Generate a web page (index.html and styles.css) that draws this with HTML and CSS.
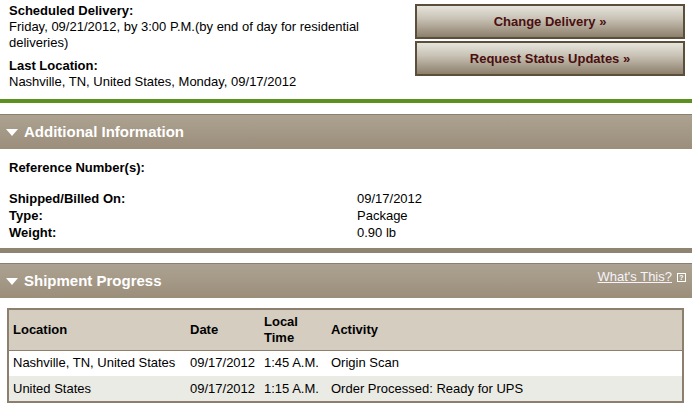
FILE: index.html
```html
<!DOCTYPE html>
<html>
<head>
<meta charset="utf-8">
<link rel="stylesheet" href="styles.css">
</head>
<body>
<div class="top">
  <div class="summary">
    <div class="block">
      <div class="lbl">Scheduled Delivery:</div>
      <div>Friday, 09/21/2012, by 3:00 P.M.(by end of day for residential deliveries)</div>
    </div>
    <div class="block">
      <div class="lbl">Last Location:</div>
      <div>Nashville, TN, United States, Monday, 09/17/2012</div>
    </div>
  </div>
  <div class="actions">
    <a class="btn">Change Delivery »</a>
    <a class="btn">Request Status Updates »</a>
  </div>
</div>
<div class="green"></div>

<div class="sec-head">
  <span class="tri"></span><span class="sec-title">Additional Information</span>
</div>
<div class="info">
  <div class="lbl ref">Reference Number(s):</div>
  <div class="kv"><span class="lbl">Shipped/Billed On:</span><span>09/17/2012</span></div>
  <div class="kv"><span class="lbl">Type:</span><span>Package</span></div>
  <div class="kv"><span class="lbl">Weight:</span><span>0.90 lb</span></div>
</div>
<div class="grey"></div>

<div class="sec-head">
  <span class="tri"></span><span class="sec-title">Shipment Progress</span>
  <span class="whats"><a>What's This?</a><span class="qbox">?</span></span>
</div>
<div class="tablewrap">
  <table class="prog">
    <thead>
      <tr><th class="c1">Location</th><th class="c2">Date</th><th class="c3">Local<br>Time</th><th>Activity</th></tr>
    </thead>
    <tbody>
      <tr><td>Nashville, TN, United States</td><td>09/17/2012</td><td>1:45 A.M.</td><td>Origin Scan</td></tr>
      <tr class="alt"><td>United States</td><td>09/17/2012</td><td>1:15 A.M.</td><td>Order Processed: Ready for UPS</td></tr>
    </tbody>
  </table>
</div>
</body>
</html>
```

FILE: styles.css
```css
* { box-sizing: border-box; }
body {
  margin: 0;
  font-family: "Liberation Sans", Arial, Helvetica, sans-serif;
  font-size: 13px;
  line-height: 16px;
  color: #000;
  background: #fff;
  width: 692px;
}
.lbl { font-weight: bold; }
.top {
  display: flex;
  justify-content: space-between;
  padding: 3px 7px 0 9px;
  height: 99px;
}
.summary { width: 400px; }
.block + .block { margin-top: 7px; }
.actions {
  display: flex;
  flex-direction: column;
  gap: 2px;
  padding-top: 1px;
  width: 270px;
}
.btn {
  display: flex;
  align-items: center;
  justify-content: center;
  height: 35px;
  border: 2px solid #5b4e3b;
  background: linear-gradient(#e6e4dc 0%, #c9c3b6 40%, #8d7f6c 100%);
  color: #4a0f0f;
  font-weight: bold;
  font-size: 13px;
}
.green { height: 4px; background: #5b921f; }
.grey { height: 5px; background: #8f8372; }
.sec-head {
  margin-top: 11px;
  height: 35px;
  display: flex;
  align-items: center;
  padding-left: 6px;
  background: linear-gradient(#ada291, #9b8e7b);
  border-top: 1px solid #8b7f6d;
  color: #fff;
}
.grey + .sec-head { margin-top: 10px; }
.tri {
  width: 0; height: 0;
  border-left: 6px solid transparent;
  border-right: 6px solid transparent;
  border-top: 7px solid #fff;
  margin-right: 6px;
  margin-top: 1px;
}
.sec-title { font-weight: bold; font-size: 15px; }
.whats {
  margin-left: auto;
  margin-right: 6px;
  align-self: flex-start;
  margin-top: 5px;
  display: flex;
  align-items: center;
  gap: 5px;
}
.whats a { color: #f4f4fa; text-decoration: underline; font-size: 13px; }
.qbox {
  width: 9px; height: 9px;
  border: 1px solid #fff;
  font-size: 7px; line-height: 7px;
  text-align: center;
  font-weight: bold;
}
.info { padding: 11px 9px 7px 9px; }
.ref { margin-bottom: 14px; }
.kv { display: flex; line-height: 17px; }
.kv .lbl { width: 348px; }
.tablewrap { padding: 10px 8px 0 7px; }
.prog {
  width: 100%;
  border-collapse: collapse;
  border: 2px solid #8c7f6e;
}
.prog th {
  background: #d5cdc0;
  text-align: left;
  font-weight: bold;
  height: 41px;
  padding: 0 4px;
  border-bottom: 1px solid #8c7f6e;
  vertical-align: middle;
}
.prog td {
  height: 26px;
  padding: 0 4px;
  white-space: nowrap;
}
.prog tr.alt td { background: #ebebe5; }
.c1 { width: 178px; }
.c2 { width: 74px; }
.c3 { width: 67px; }
```
